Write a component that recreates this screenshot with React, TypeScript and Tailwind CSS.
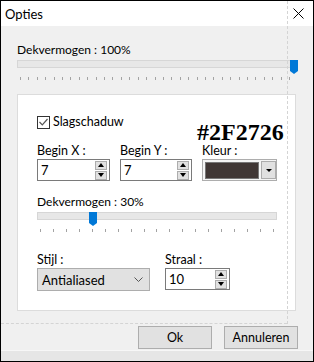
import React from 'react';

const font = { fontFamily: 'Lato, "Noto Sans", "Liberation Sans", sans-serif' };

function Ticks({ count, className }: { count: number; className: string }) {
  return (
    <div className={`flex justify-between ${className}`}>
      {Array.from({ length: count }).map((_, i) => (
        <span key={i} className="w-px h-[3px] bg-[#a3a3a3]" />
      ))}
    </div>
  );
}

function Thumb() {
  return (
    <svg width="8" height="14" viewBox="0 0 8 14">
      <path d="M0 0 H8 V11 L4 14 L0 11 Z" fill="#0078d7" />
    </svg>
  );
}

function Slider({ thumbLeft, className }: { thumbLeft: number; className: string }) {
  return (
    <div className={`relative h-[14px] ${className}`}>
      <div className="mt-[2px] h-[8px] bg-[#e7e7e7] border border-[#d6d6d6]" />
      <div className="absolute top-0" style={{ left: thumbLeft }}>
        <Thumb />
      </div>
    </div>
  );
}

function SpinButtons() {
  return (
    <div className="flex flex-col gap-px mr-[2px]">
      <div className="w-[12px] h-[9px] bg-[#e1e1e1] border border-[#adadad] flex items-center justify-center">
        <svg width="6" height="4" viewBox="0 0 6 4"><path d="M0 4 L3 0 L6 4 Z" fill="#000" /></svg>
      </div>
      <div className="w-[12px] h-[9px] bg-[#e1e1e1] border border-[#adadad] flex items-center justify-center">
        <svg width="6" height="4" viewBox="0 0 6 4"><path d="M0 0 L3 4 L6 0 Z" fill="#000" /></svg>
      </div>
    </div>
  );
}

function SpinBox({ value, width }: { value: string; width: string }) {
  return (
    <div className={`${width} h-[22px] bg-white border border-[#7a7a7a] flex items-center justify-between`}>
      <span className="pl-[3px] text-[13px] leading-[16px]">{value}</span>
      <SpinButtons />
    </div>
  );
}

export default function App() {
  return (
    <div className="relative w-[314px] h-[362px] border border-black flex flex-col text-black bg-[#f0f0f0] overflow-hidden" style={font}>
      <div className="h-[25px] bg-white flex items-center justify-between pl-[4px] pr-[9px]">
        <span className="text-[13px] leading-[16px]">Opties</span>
        <svg width="11" height="11" viewBox="0 0 11 11">
          <path d="M0.5 0.5 L10.5 10.5 M10.5 0.5 L0.5 10.5" stroke="#000" strokeWidth="1" />
        </svg>
      </div>

      <div className="flex-1 pl-[16px]">
        <div className="mt-[16px] text-[12px] leading-[16px]">Dekvermogen : 100%</div>
        <Slider thumbLeft={273} className="w-[276px]" />
        <Ticks count={33} className="mt-[3px] w-[273px] pl-[3px]" />

        <div className="mt-[14px] w-[279px] bg-white border border-[#dcdcdc] pl-[19px] pb-[19px]">
          <div className="flex items-start pt-[20px] h-[48px]">
            <div className="w-[160px] flex items-center gap-[3px]">
              <div className="w-[13px] h-[13px] border border-[#333] bg-white flex items-center justify-center">
                <svg width="9" height="8" viewBox="0 0 9 8">
                  <path d="M0.5 4 L3.3 6.8 L8.5 1" stroke="#555" strokeWidth="1.2" fill="none" />
                </svg>
              </div>
              <span className="text-[12.5px] leading-[14px]">Slagschaduw</span>
            </div>
            <div className="mt-[8px] text-[24px] leading-[18px] font-bold" style={{ fontFamily: '"Liberation Serif", serif' }}>
              #2F2726
            </div>
          </div>

          <div className="flex gap-[10px]">
            <div className="flex flex-col">
              <span className="text-[12.5px] leading-[16px]">Begin X :</span>
              <SpinBox value="7" width="w-[73px]" />
            </div>
            <div className="flex flex-col">
              <span className="text-[12.5px] leading-[16px]">Begin Y :</span>
              <SpinBox value="7" width="w-[72px]" />
            </div>
            <div className="flex flex-col">
              <span className="text-[12.5px] leading-[16px]">Kleur :</span>
              <div className="w-[75px] h-[22px] border border-[#adadad] bg-[#f5f5f5] flex items-center pl-[2px] gap-[2px]">
                <div className="w-[54px] h-[17px] bg-[#403735] border border-[#777]" />
                <div className="w-[15px] h-[18px] bg-[#e1e1e1] border border-[#adadad] flex items-center justify-center">
                  <svg width="6" height="3" viewBox="0 0 6 3"><path d="M0 0 L3 3 L6 0 Z" fill="#000" /></svg>
                </div>
              </div>
            </div>
          </div>

          <div className="mt-[13px] text-[12px] leading-[16px]">Dekvermogen : 30%</div>
          <Slider thumbLeft={52} className="w-[240px]" />
          <Ticks count={19} className="mt-[3px] w-[237px] pl-[3px]" />

          <div className="mt-[20px] flex gap-[15px]">
            <div className="flex flex-col">
              <span className="text-[12.5px] leading-[16px]">Stijl :</span>
              <div className="w-[113px] h-[23px] bg-[#e1e1e1] border border-[#adadad] flex items-center justify-between pl-[4px] pr-[6px]">
                <span className="text-[13px] leading-[16px]">Antialiased</span>
                <svg width="9" height="5" viewBox="0 0 9 5">
                  <path d="M0.5 0.5 L4.5 4.5 L8.5 0.5" stroke="#555" strokeWidth="1" fill="none" />
                </svg>
              </div>
            </div>
            <div className="flex flex-col">
              <span className="text-[12.5px] leading-[16px]">Straal :</span>
              <SpinBox value="10" width="w-[65px]" />
            </div>
          </div>
        </div>

        <div className="mt-[15px] flex justify-end gap-[12px] pr-[15px]">
          <button className="w-[74px] h-[23px] bg-[#e1e1e1] border border-[#adadad] text-[12.5px] leading-[16px]">Ok</button>
          <button className="w-[74px] h-[23px] bg-[#e1e1e1] border border-[#adadad] text-[12.5px] leading-[16px]">Annuleren</button>
        </div>
      </div>

      <div className="h-[11px] bg-[#e6e6e6] border-t border-[#f7f7f7]" />

      <div className="absolute left-[286px] top-0 h-[323px] border-l border-dashed border-[#d4d4d4]" />
      <div className="absolute left-0 top-[322px] w-[286px] border-t border-dashed border-[#d4d4d4]" />
    </div>
  );
}
